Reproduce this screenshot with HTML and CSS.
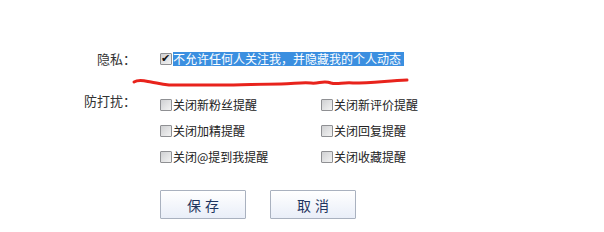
FILE: index.html
```html
<!DOCTYPE html>
<html lang="zh-CN">

<head>
  <meta charset="UTF-8">
  <title>隐私设置</title>
  <link rel="stylesheet" href="styles.css">
</head>

<body>
  <div class="settings">
    <div class="row privacy">
      <span class="label">隐私：</span>
      <label class="opt">
        <span class="box checked"></span><span class="selected">不允许任何人关注我，并隐藏我的个人动态</span>
      </label>
    </div>

    <svg class="scribble" width="280" height="14" viewBox="0 0 280 14">
      <path d="M3 8 C8 5 14 7 20 8 S30 10 38 11 L90 11 C110 11 130 10 150 10 C162 10 170 8 180 9 C188 10 192 6 200 9 C206 11 212 8 222 9 C240 9 255 7 276 6"
        fill="none" stroke="#e8231c" stroke-width="3" stroke-linecap="round" />
    </svg>

    <div class="row dnd">
      <span class="label">防打扰：</span>
      <div class="options">
        <label class="opt"><span class="box"></span>关闭新粉丝提醒</label>
        <label class="opt"><span class="box"></span>关闭新评价提醒</label>
        <label class="opt"><span class="box"></span>关闭加精提醒</label>
        <label class="opt"><span class="box"></span>关闭回复提醒</label>
        <label class="opt"><span class="box"></span>关闭@提到我提醒</label>
        <label class="opt"><span class="box"></span>关闭收藏提醒</label>
      </div>
    </div>

    <div class="actions">
      <button class="btn">保存</button>
      <button class="btn">取消</button>
    </div>
  </div>
</body>

</html>
```

FILE: styles.css
```css
html {
  background: #fff;
}

body {
  margin: 0;
  font: 12px/14px "Noto Sans CJK SC", "DejaVu Sans", sans-serif;
  color: #222;
}

.settings {
  padding: 52px 0 0 84px;
}

.row {
  display: flex;
  align-items: flex-start;
}

.label {
  width: 52px;
  margin-right: 24px;
  text-align: right;
  white-space: nowrap;
  font-size: 13px;
  line-height: 14px;
  color: #333;
}

.opt {
  display: flex;
  align-items: center;
  height: 14px;
  white-space: nowrap;
}

.box {
  box-sizing: border-box;
  width: 12px;
  height: 12px;
  margin-right: 1px;
  border: 1px solid #8f9093;
  border-radius: 1px;
  background: linear-gradient(135deg, #cfd0d2, #f3f3f3);
  position: relative;
}

.box.checked::after {
  content: "✔";
  position: absolute;
  left: 0;
  top: -2px;
  font: bold 11px/14px "DejaVu Sans", sans-serif;
  color: #111;
}

.selected {
  background: #3b8fe0;
  color: #fff;
  padding: 0 3px 0 0;
}

.scribble {
  display: block;
  margin: 8px 0 0 47px;
}

.dnd {
  margin-top: 10px;
}

.dnd .label {
  margin-top: -4px;
}

.options {
  display: grid;
  grid-template-columns: 161px 120px;
  row-gap: 12px;
}

.actions {
  display: flex;
  gap: 24px;
  margin: 26px 0 0 76px;
}

.btn {
  width: 86px;
  height: 29px;
  border: 1px solid #a9b1bf;
  border-radius: 1px;
  background: linear-gradient(#ffffff, #e9eef8);
  font: 14px "Noto Sans CJK SC", sans-serif;
  letter-spacing: 4px;
  text-indent: 4px;
  color: #1f3560;
  padding: 0;
}
```
